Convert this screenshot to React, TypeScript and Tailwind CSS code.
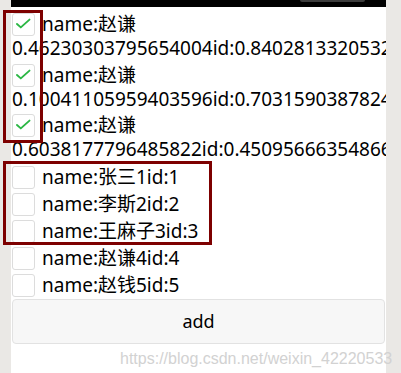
import React from 'react';

type Row = { name: string; id: string; checked: boolean };

const checkedRows: Row[] = [
  { name: '赵谦', id: '0.46230303795654004id:0.8402813320532', checked: true },
  { name: '赵谦', id: '0.10041105959403596id:0.7031590387824', checked: true },
  { name: '赵谦', id: '0.6038177796485822id:0.45095666354866', checked: true },
];

const plainRows = [
  { name: '张三1', id: '1' },
  { name: '李斯2', id: '2' },
  { name: '王麻子3', id: '3' },
  { name: '赵谦4', id: '4' },
  { name: '赵钱5', id: '5' },
];

const Box = ({ checked }: { checked?: boolean }) => (
  <span className="flex h-[23px] w-[23px] shrink-0 items-center justify-center rounded-[3px] border border-[#dcdcdc] bg-white">
    {checked ? (
      <svg width="21" height="21" viewBox="0 0 21 21" fill="none">
        <path d="M4 10 L7.8 13.4 L16.5 5.6" stroke="#2bb744" strokeWidth="1.9" strokeLinecap="round" strokeLinejoin="round" />
      </svg>
    ) : undefined}
  </span>
);

const App = () => {
  return (
    <div className="relative flex h-[373px] w-[401px] bg-[#eae8e5] font-['Noto_Sans','Noto_Sans_CJK_SC',sans-serif] text-[19px] text-black">
      <div className="ml-[11px] flex h-full w-[375px] flex-col overflow-hidden bg-white">
        <div className="flex h-[7px] shrink-0 bg-black">
          <div className="ml-[289px] h-[2px] w-[65px] rounded-b-sm bg-[#3c3c3c]" />
        </div>
        <div className="h-[5px] shrink-0" />
        {checkedRows.map((row, i) => (
          <div key={i} className="flex flex-col">
            <label className="flex h-[25px] items-center gap-[7px] pl-px">
              <Box checked={row.checked} />
              <span className="whitespace-nowrap leading-none">name:{row.name}</span>
            </label>
            <p className="h-[25.5px] whitespace-nowrap pl-px leading-[22px]">{row.id}</p>
          </div>
        ))}
        {plainRows.map((row) => (
          <label key={row.id} className="flex h-[27px] shrink-0 items-center gap-[7px] pl-px">
            <Box />
            <span className="whitespace-nowrap leading-none">
              name:{row.name}id:{row.id}
            </span>
          </label>
        ))}
        <button
          type="button"
          className="mx-px flex h-[45px] shrink-0 items-center justify-center rounded-[4px] border border-[#e2e2e2] bg-[#f7f7f7] text-[18px]"
        >
          add
        </button>
      </div>

      {/* annotation boxes */}
      <div className="pointer-events-none absolute left-[3px] top-[10px] h-[133px] w-[40px] border-[3px] border-[#7d0000]" />
      <div className="pointer-events-none absolute left-[3px] top-[161px] h-[84px] w-[209px] border-[3px] border-[#7d0000]" />

      <span className="pointer-events-none absolute left-[120px] top-[347px] whitespace-nowrap font-['Liberation_Sans',sans-serif] text-[16px] text-[#d2d2d2]">
        https://blog.csdn.net/weixin_42220533
      </span>
    </div>
  );
};

export default App;
